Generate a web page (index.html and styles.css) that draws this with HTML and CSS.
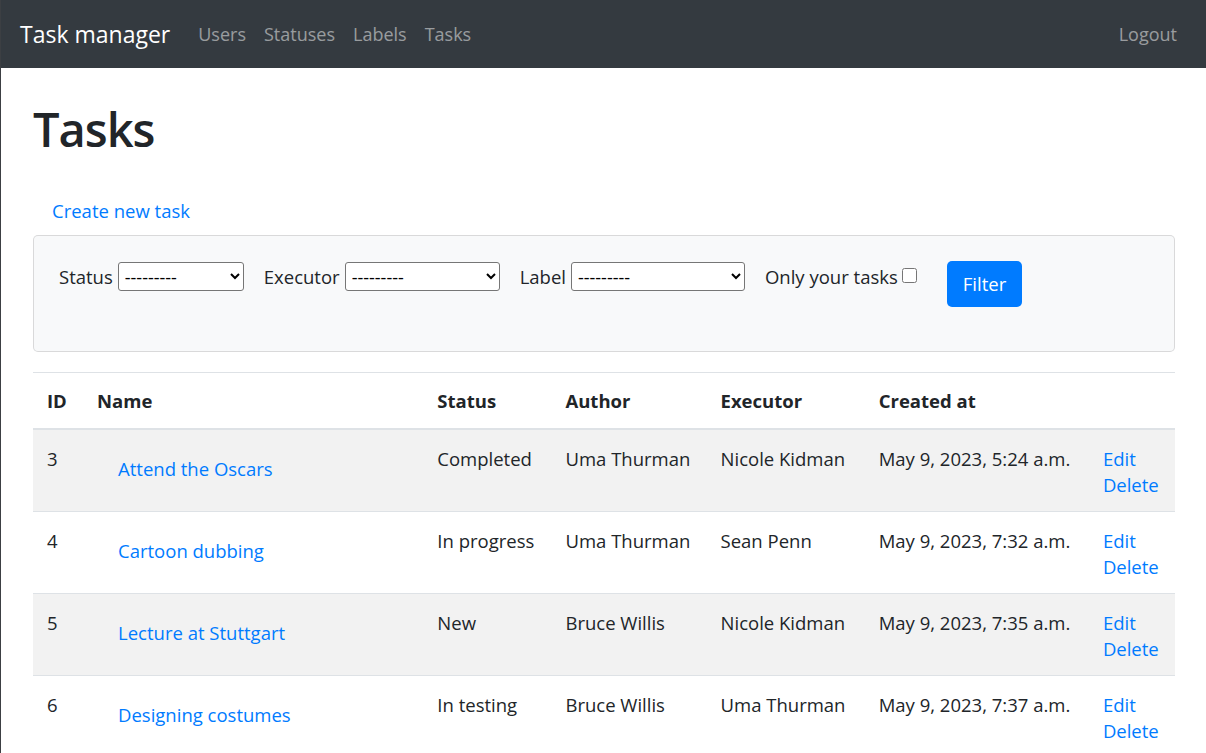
FILE: index.html
```html
<!DOCTYPE html>
<html lang="en">
<head>
<meta charset="utf-8">
<title>Tasks</title>
<link rel="stylesheet" href="styles.css">
</head>
<body>
<div class="page">
  <nav class="navbar">
    <a class="brand" href="#">Task manager</a>
    <ul class="nav-links">
      <li><a href="#">Users</a></li>
      <li><a href="#">Statuses</a></li>
      <li><a href="#">Labels</a></li>
      <li><a href="#">Tasks</a></li>
    </ul>
    <ul class="nav-links nav-right">
      <li><a href="#">Logout</a></li>
    </ul>
  </nav>
  <main class="content">
    <h1 class="title">Tasks</h1>
    <a class="btn-link create" href="#">Create new task</a>
    <div class="card">
      <form class="filter">
        <div class="field">
          <label class="field-label">Status</label>
          <select class="sel sel-status"><option>---------</option></select>
        </div>
        <div class="field">
          <label class="field-label">Executor</label>
          <select class="sel sel-executor"><option>---------</option></select>
        </div>
        <div class="field">
          <label class="field-label">Label</label>
          <select class="sel sel-label"><option>---------</option></select>
        </div>
        <div class="field field-check">
          <label class="field-label">Only your tasks</label>
          <input class="check" type="checkbox">
        </div>
        <button class="btn" type="button">Filter</button>
      </form>
    </div>
    <table class="table">
      <colgroup>
        <col class="c-id"><col class="c-name"><col class="c-status"><col class="c-author"><col class="c-exec"><col class="c-created"><col class="c-actions">
      </colgroup>
      <thead>
        <tr><th>ID</th><th>Name</th><th>Status</th><th>Author</th><th>Executor</th><th>Created at</th><th></th></tr>
      </thead>
      <tbody>
        <tr>
          <td>3</td><td><a class="btn-link" href="#">Attend the Oscars</a></td><td>Completed</td><td>Uma Thurman</td><td>Nicole Kidman</td><td>May 9, 2023, 5:24 a.m.</td>
          <td><a class="link" href="#">Edit</a><br><a class="link" href="#">Delete</a></td>
        </tr>
        <tr>
          <td>4</td><td><a class="btn-link" href="#">Cartoon dubbing</a></td><td>In progress</td><td>Uma Thurman</td><td>Sean Penn</td><td>May 9, 2023, 7:32 a.m.</td>
          <td><a class="link" href="#">Edit</a><br><a class="link" href="#">Delete</a></td>
        </tr>
        <tr>
          <td>5</td><td><a class="btn-link" href="#">Lecture at Stuttgart</a></td><td>New</td><td>Bruce Willis</td><td>Nicole Kidman</td><td>May 9, 2023, 7:35 a.m.</td>
          <td><a class="link" href="#">Edit</a><br><a class="link" href="#">Delete</a></td>
        </tr>
        <tr>
          <td>6</td><td><a class="btn-link" href="#">Designing costumes</a></td><td>In testing</td><td>Bruce Willis</td><td>Uma Thurman</td><td>May 9, 2023, 7:37 a.m.</td>
          <td><a class="link" href="#">Edit</a><br><a class="link" href="#">Delete</a></td>
        </tr>
      </tbody>
    </table>
  </main>
</div>
</body>
</html>
```

FILE: styles.css
```css
* { box-sizing: border-box; }

html, body {
  margin: 0;
  padding: 0;
}

body {
  font-family: "Open Sans", "Noto Sans", sans-serif;
  font-size: 18.5px;
  line-height: 26px;
  color: #212529;
  background: #fff;
}

.page {
  border-left: 1px solid #3c3f43;
  min-height: 100vh;
}

a { text-decoration: none; color: #007bff; }

/* Navbar */
.navbar {
  display: flex;
  align-items: center;
  height: 68px;
  background: #343a40;
  padding: 0 19px 0 19px;
}

.brand {
  color: #fff;
  font-size: 23px;
  line-height: 30px;
  margin-right: 19px;
}

.nav-links {
  display: flex;
  list-style: none;
  margin: 0;
  padding: 0;
  flex: 1;
}

.nav-right { flex: 0 0 auto; }

.nav-links a {
  display: block;
  padding: 0 9px;
  font-size: 18px;
  color: rgba(255, 255, 255, 0.5);
}

.nav-right a { padding: 0 10px; }

/* Content */
.content {
  padding: 0 31px 0 32px;
}

.title {
  font-size: 47px;
  line-height: 60px;
  font-weight: 600;
  letter-spacing: -1px;
  margin: 31px 0 29px;
}

.btn-link {
  display: inline-block;
  padding: 10px 19px;
  color: #007bff;
  vertical-align: top;
}

.create { display: inline-block; }

.card {
  margin-top: 1px;
  background: #f8f9fa;
  border: 1px solid rgba(0, 0, 0, 0.125);
  border-radius: 5px;
  padding: 26px 25px 44px;
}

.filter {
  display: flex;
  align-items: flex-start;
  gap: 20px;
}

.field {
  display: flex;
  align-items: center;
  gap: 5px;
}

.field-label { white-space: nowrap; }

.sel {
  height: 29px;
  font-family: "Open Sans", "Noto Sans", sans-serif;
  font-size: 18px;
  color: #000;
  background: #fff;
  border: 1px solid #767676;
  border-radius: 3px;
  padding: 0 2px;
}

.sel-status { width: 126px; }
.sel-executor { width: 155px; }
.sel-label { width: 174px; }

.field-check {
  gap: 4px;
  height: 29px;
  align-items: center;
}

.check {
  width: 15px;
  height: 15px;
  margin: -2px 0 0 0;
}

.btn {
  margin-left: 10px;
  margin-top: -1px;
  background: #007bff;
  color: #fff;
  border: none;
  border-radius: 5px;
  padding: 10px 16px;
  font-family: "Open Sans", "Noto Sans", sans-serif;
  font-size: 18.5px;
  line-height: 26px;
}

/* Table */
.table {
  width: 100%;
  margin-top: 20px;
  border-collapse: collapse;
  table-layout: fixed;
}

.c-id { width: 50px; }
.c-name { width: 340px; }
.c-status { width: 128px; }
.c-author { width: 155px; }
.c-exec { width: 158px; }
.c-created { width: 224px; }
.c-actions { width: 86px; }

.table th,
.table td {
  text-align: left;
  vertical-align: top;
  padding: 15px 14px 14px;
  border-top: 1px solid #dee2e6;
  white-space: nowrap;
}

.table td { padding: 16px 14px 13px; }

.table th { font-weight: 700; }

.table thead th { border-bottom: 2px solid #dee2e6; }

.table tbody tr:nth-child(odd) { background: rgba(0, 0, 0, 0.05); }

.table td .btn-link { margin: 0 -19px 0 0; padding-left: 21px; }
```
